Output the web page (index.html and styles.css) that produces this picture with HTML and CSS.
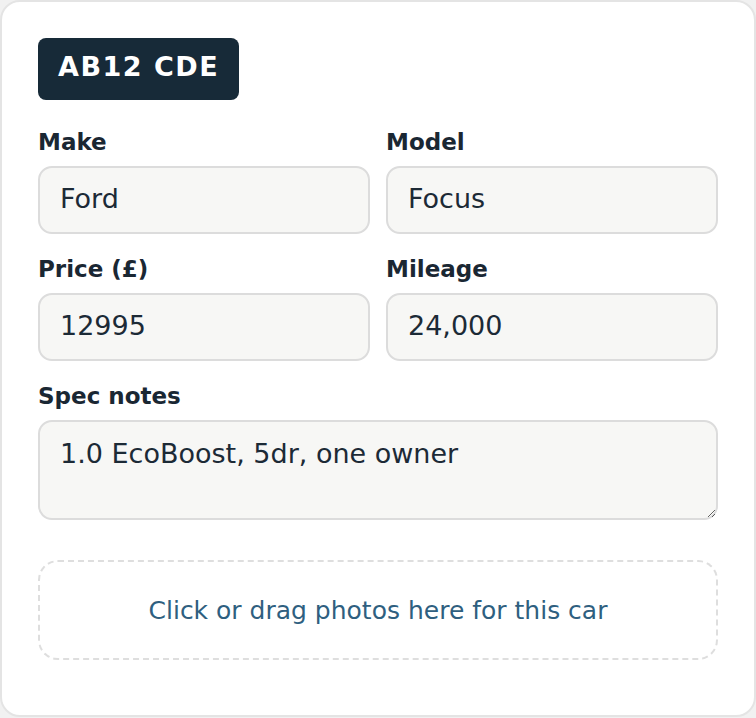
FILE: index.html
```html
<!DOCTYPE html>
<html lang="en">
<head>
    <meta charset="UTF-8">
    <meta name="viewport" content="width=device-width, initial-scale=1.0">
    <title>Car listing</title>
    <link rel="stylesheet" href="styles.css">
</head>
<body>
    <div class="car-card">
        <div class="plate">AB12 CDE</div>

        <div class="fields">
            <div class="field">
                <label for="make">Make</label>
                <input type="text" id="make" value="Ford">
            </div>
            <div class="field">
                <label for="model">Model</label>
                <input type="text" id="model" value="Focus">
            </div>
            <div class="field">
                <label for="price">Price (£)</label>
                <input type="text" id="price" value="12995">
            </div>
            <div class="field">
                <label for="mileage">Mileage</label>
                <input type="text" id="mileage" value="24,000">
            </div>
            <div class="field wide">
                <label for="notes">Spec notes</label>
                <textarea id="notes">1.0 EcoBoost, 5dr, one owner</textarea>
            </div>
        </div>

        <div class="dropzone">Click or drag photos here for this car</div>
    </div>
</body>
</html>
```

FILE: styles.css
```css
body {
    margin: 0;
    background-color: #f1f1f1;
    font-family: "DejaVu Sans", Verdana, sans-serif;
    color: #1b2833;
}
.car-card {
    box-sizing: border-box;
    width: 756px;
    height: 717px;
    padding: 36px 36px 0;
    background-color: #fff;
    border: 2px solid #e4e4e4;
    border-radius: 20px;
}
.plate {
    display: inline-flex;
    align-items: center;
    box-sizing: border-box;
    height: 62px;
    padding: 0 20px 5px 20px;
    background-color: #172a38;
    color: #fff;
    border-radius: 8px;
    font-size: 27px;
    font-weight: bold;
    letter-spacing: 1.5px;
    margin-bottom: 29px;
}
.fields {
    display: grid;
    grid-template-columns: 1fr 1fr;
    column-gap: 16px;
    row-gap: 22px;
}
.field {
    display: flex;
    flex-direction: column;
}
.field.wide {
    grid-column: 1 / 3;
}
label {
    font-size: 23px;
    font-weight: bold;
    line-height: 26px;
    margin-bottom: 11px;
    color: #1a2733;
}
input, textarea {
    box-sizing: border-box;
    width: 100%;
    font-family: "DejaVu Sans", Verdana, sans-serif;
    font-size: 27px;
    color: #1c2a36;
    background-color: #f7f7f5;
    border: 2px solid #dcdcdc;
    border-radius: 14px;
    margin: 0;
}
input {
    height: 68px;
    padding: 0 20px 3px;
}
textarea {
    height: 100px;
    padding: 16px 20px 12px;
    resize: vertical;
}
.dropzone {
    box-sizing: border-box;
    height: 100px;
    margin-top: 40px;
    display: flex;
    align-items: center;
    justify-content: center;
    border: 2px dashed #dedede;
    border-radius: 20px;
    color: #2f5f80;
    font-size: 25px;
}
```
